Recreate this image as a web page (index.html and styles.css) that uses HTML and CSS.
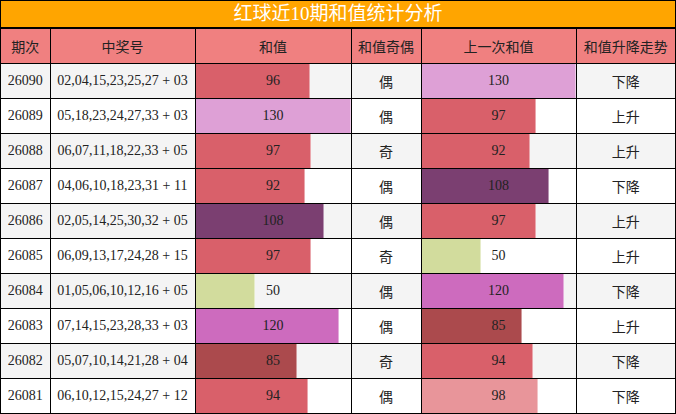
FILE: index.html
```html
<!DOCTYPE html>
<html lang="zh">
<head>
<meta charset="utf-8">
<title>红球近10期和值统计分析</title>
<link rel="stylesheet" href="styles.css">
</head>
<body>
<div class="wrap">
  <div class="title">红球近10期和值统计分析</div>
  <table class="grid">
    <colgroup>
      <col class="w-issue"><col class="w-nums"><col class="w-sum"><col class="w-odd"><col class="w-prev"><col class="w-trend">
    </colgroup>
    <thead>
      <tr><th>期次</th><th>中奖号</th><th>和值</th><th>和值奇偶</th><th>上一次和值</th><th>和值升降走势</th></tr>
    </thead>
    <tbody>
      <tr class="alt"><td>26090</td><td>02,04,15,23,25,27 + 03</td><td class="barcell"><span class="bar red" style="width:73.85%"></span><span class="val">96</span></td><td>偶</td><td class="barcell"><span class="bar plum" style="width:100%"></span><span class="val">130</span></td><td>下降</td></tr>
      <tr><td>26089</td><td>05,18,23,24,27,33 + 03</td><td class="barcell"><span class="bar plum" style="width:100%"></span><span class="val">130</span></td><td>偶</td><td class="barcell"><span class="bar red" style="width:74.62%"></span><span class="val">97</span></td><td>上升</td></tr>
      <tr class="alt"><td>26088</td><td>06,07,11,18,22,33 + 05</td><td class="barcell"><span class="bar red" style="width:74.62%"></span><span class="val">97</span></td><td>奇</td><td class="barcell"><span class="bar red" style="width:70.77%"></span><span class="val">92</span></td><td>上升</td></tr>
      <tr><td>26087</td><td>04,06,10,18,23,31 + 11</td><td class="barcell"><span class="bar red" style="width:70.77%"></span><span class="val">92</span></td><td>偶</td><td class="barcell"><span class="bar purple" style="width:83.08%"></span><span class="val">108</span></td><td>下降</td></tr>
      <tr class="alt"><td>26086</td><td>02,05,14,25,30,32 + 05</td><td class="barcell"><span class="bar purple" style="width:83.08%"></span><span class="val">108</span></td><td>偶</td><td class="barcell"><span class="bar red" style="width:74.62%"></span><span class="val">97</span></td><td>上升</td></tr>
      <tr><td>26085</td><td>06,09,13,17,24,28 + 15</td><td class="barcell"><span class="bar red" style="width:74.62%"></span><span class="val">97</span></td><td>奇</td><td class="barcell"><span class="bar green" style="width:38.46%"></span><span class="val">50</span></td><td>上升</td></tr>
      <tr class="alt"><td>26084</td><td>01,05,06,10,12,16 + 05</td><td class="barcell"><span class="bar green" style="width:38.46%"></span><span class="val">50</span></td><td>偶</td><td class="barcell"><span class="bar orchid" style="width:92.31%"></span><span class="val">120</span></td><td>下降</td></tr>
      <tr><td>26083</td><td>07,14,15,23,28,33 + 03</td><td class="barcell"><span class="bar orchid" style="width:92.31%"></span><span class="val">120</span></td><td>偶</td><td class="barcell"><span class="bar brown" style="width:65.38%"></span><span class="val">85</span></td><td>上升</td></tr>
      <tr class="alt"><td>26082</td><td>05,07,10,14,21,28 + 04</td><td class="barcell"><span class="bar brown" style="width:65.38%"></span><span class="val">85</span></td><td>奇</td><td class="barcell"><span class="bar red" style="width:72.31%"></span><span class="val">94</span></td><td>下降</td></tr>
      <tr><td>26081</td><td>06,10,12,15,24,27 + 12</td><td class="barcell"><span class="bar red" style="width:72.31%"></span><span class="val">94</span></td><td>偶</td><td class="barcell"><span class="bar pink" style="width:75.38%"></span><span class="val">98</span></td><td>下降</td></tr>
    </tbody>
  </table>
</div>
</body>
</html>
```

FILE: styles.css
```css
html, body {
  margin: 0;
  padding: 0;
  background: #ffffff;
}

.wrap {
  width: 676px;
  box-sizing: border-box;
  border-top: 1px solid #000;
  border-left: 1px solid #000;
  border-right: 1px solid #000;
  font-family: "Liberation Serif", "Noto Sans CJK SC", serif;
  color: #222;
}

.title {
  height: 26px;
  background: #ffa500;
  color: #ffffff;
  font-size: 19px;
  line-height: 26px;
  text-align: center;
  border-bottom: 1px solid #000;
}

.grid {
  width: 674px;
  border-collapse: collapse;
  table-layout: fixed;
}

.w-issue { width: 49px; }
.w-nums { width: 145px; }
.w-sum { width: 156px; }
.w-odd { width: 70px; }
.w-prev { width: 155px; }
.w-trend { width: 99px; }

.grid th,
.grid td {
  border: 1px solid #000;
  padding: 0;
  text-align: center;
  font-size: 14px;
  font-weight: normal;
  white-space: nowrap;
}

.grid tr > :first-child { border-left: none; }
.grid tr > :last-child { border-right: none; }

.grid th {
  height: 34px;
  background: #f08080;
  color: #222;
}

.grid td {
  height: 34px;
  background: #ffffff;
}

.grid tr.alt td {
  background: #f4f4f4;
}

.barcell {
  position: relative;
}

.bar {
  position: absolute;
  left: 0;
  top: 0;
  bottom: 0;
  box-sizing: border-box;
  border-right: 1px solid rgba(255, 255, 255, 0.45);
}

.val {
  position: relative;
}

.red { background: #d9606a; }
.plum { background: #dea0d6; }
.purple { background: #7b3f71; }
.green { background: #d2dc9d; }
.orchid { background: #cd6bbe; }
.brown { background: #ab4a4d; }
.pink { background: #e8959a; }
```
